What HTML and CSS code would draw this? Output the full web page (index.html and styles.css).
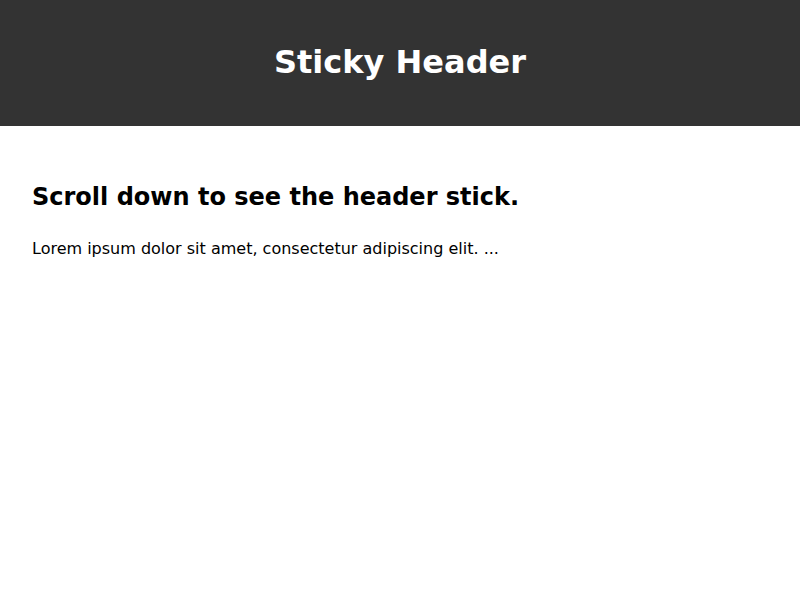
FILE: index.html
```html
<!DOCTYPE html>
<html>
<head>
<meta charset="utf-8">
<link rel="stylesheet" href="styles.css">
</head>
<body>
<header class="site-header">
  <h1 class="site-title">Sticky Header</h1>
</header>
<main class="content">
  <h2 class="content-title">Scroll down to see the header stick.</h2>
  <p class="content-text">Lorem ipsum dolor sit amet, consectetur adipiscing elit. ...</p>
</main>
</body>
</html>
```
FILE: styles.css
```css
html, body {
  margin: 0;
  padding: 0;
  background: #ffffff;
  font-family: "DejaVu Sans", sans-serif;
  color: #000;
}
.site-header {
  position: sticky;
  top: 0;
  box-sizing: border-box;
  background: #333333;
  color: #ffffff;
  height: 126px;
  padding-bottom: 2px;
  display: flex;
  align-items: center;
  justify-content: center;
}
.site-title {
  margin: 0;
  font-size: 32px;
  font-weight: bold;
}
.content {
  padding: 57px 32px;
}
.content-title {
  margin: 0;
  font-size: 24px;
  font-weight: bold;
}
.content-text {
  margin: 28px 0 0;
  font-size: 16px;
}
```
